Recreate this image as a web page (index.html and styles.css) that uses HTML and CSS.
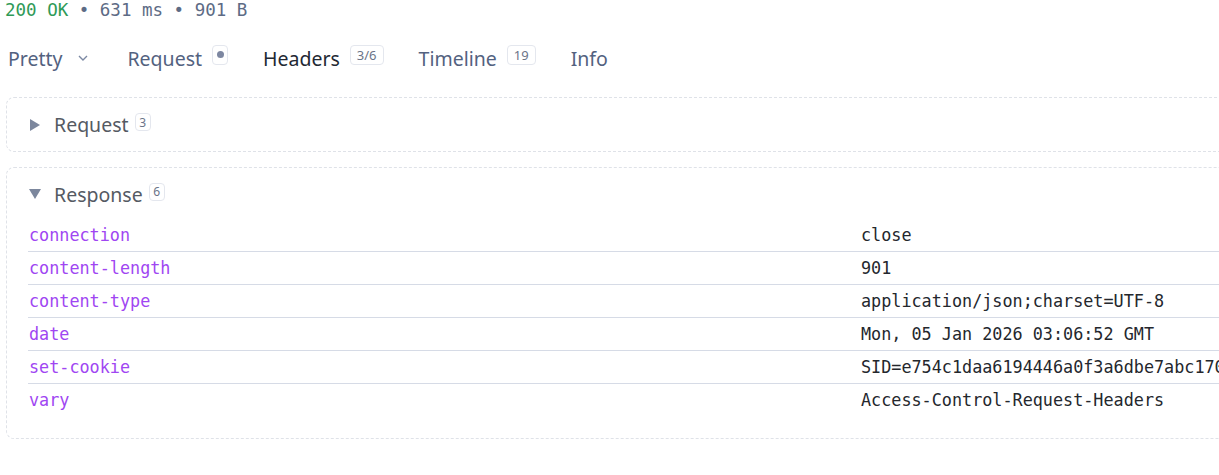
FILE: index.html
```html
<!DOCTYPE html>
<html>
<head>
    <title>Response headers</title>
    <meta charset="utf-8"/>
    <link rel="stylesheet" href="styles.css">
</head>
<body>

    <div class="status"><span class="ok">200 OK</span> &bull; 631 ms &bull; 901 B</div>

    <div class="tabs">
        <div class="tab">Pretty <svg class="chev" width="12" height="8" viewBox="0 0 12 8"><path d="M2 2 L6 6 L10 2" fill="none" stroke="#7b88a3" stroke-width="1.4"/></svg></div>
        <div class="tab">Request <span class="badge dot-badge"><span class="dot"></span></span></div>
        <div class="tab active">Headers <span class="badge">3/6</span></div>
        <div class="tab">Timeline <span class="badge">19</span></div>
        <div class="tab">Info</div>
    </div>

    <div class="panel first">
        <div class="panel-head">
            <svg class="tri" width="10" height="12" viewBox="0 0 10 12"><path d="M0 0 L10 6 L0 12 Z" fill="#7c879d"/></svg>
            <span class="panel-title">Request</span>
            <span class="badge small">3</span>
        </div>
    </div>

    <div class="panel open">
        <div class="panel-head">
            <svg class="tri" width="12" height="10" viewBox="0 0 12 10"><path d="M0 0 L12 0 L6 10 Z" fill="#7c879d"/></svg>
            <span class="panel-title">Response</span>
            <span class="badge small">6</span>
        </div>
        <table class="headers">
            <colgroup><col class="key-col"><col></colgroup>
            <tr><td class="key">connection</td><td class="val">close</td></tr>
            <tr><td class="key">content-length</td><td class="val">901</td></tr>
            <tr><td class="key">content-type</td><td class="val">application/json;charset=UTF-8</td></tr>
            <tr><td class="key">date</td><td class="val">Mon, 05 Jan 2026 03:06:52 GMT</td></tr>
            <tr><td class="key">set-cookie</td><td class="val">SID=e754c1daa6194446a0f3a6dbe7abc170d2e4f1</td></tr>
            <tr><td class="key">vary</td><td class="val">Access-Control-Request-Headers</td></tr>
        </table>
    </div>

</body>
</html>
```

FILE: styles.css
```css
body {
    margin: 0px;
    padding: 0px;
    background-color: #fff;
    font-family: "Noto Sans", sans-serif;
    overflow: hidden;
    width: 1219px;
}

.status {
    font-family: "DejaVu Sans Mono", monospace;
    font-size: 17.5px;
    color: #5d6b85;
    padding-left: 5px;
    height: 20px;
    line-height: 20px;
    white-space: nowrap;
}
.status .ok {color: #2f9a57;}

.tabs {
    display: flex;
    align-items: center;
    gap: 35px;
    padding-left: 8px;
    height: 40px;
    margin-top: 18px;
}
.tab {
    display: flex;
    align-items: center;
    gap: 10px;
    font-size: 19.5px;
    color: #53627f;
    white-space: nowrap;
}
.tab.active {color: #222833;}
.chev {margin-left: 5px; margin-right: 3px;}

.badge {
    display: inline-flex;
    align-items: center;
    justify-content: center;
    height: 20px;
    min-width: 17px;
    padding: 0 6px;
    border: 1px solid #e4e7ee;
    border-radius: 4px;
    font-size: 13px;
    color: #6b7488;
    box-sizing: border-box;
    margin-top: -7px;
}
.badge.dot-badge {width: 16px; min-width: 16px; padding: 0px;}
.badge .dot {width: 7px; height: 7px; border-radius: 50%; background-color: #7d87a1;}
.badge.small {height: 18px; min-width: 16px; padding: 0 3px; font-size: 12px; margin-top: -5px;}

.panel {
    width: 1300px;
    margin-left: 6px;
    border: 1px dashed #dfe2e8;
    border-radius: 8px;
    box-sizing: border-box;
}
.panel.first {margin-top: 19px;}
.panel.open {margin-top: 15px; padding-bottom: 22px;}

.panel-head {
    display: flex;
    align-items: center;
    height: 53px;
    padding-left: 21px;
}
.open .panel-head {height: 50px; padding-top: 1px;}
.tri {width: 14px; display: block;}
.panel-title {
    font-size: 19.5px;
    color: #555a63;
    margin-left: 12px;
    margin-right: 6px;
}

.headers {
    border-collapse: collapse;
    table-layout: fixed;
    margin-left: 21px;
    width: 1250px;
    font-family: "DejaVu Sans Mono", monospace;
    font-size: 16.8px;
}
.key-col {width: 832px;}
.headers td {
    height: 32px;
    padding: 0 0 0 1px;
    border-bottom: 1px solid #d6dbe6;
    white-space: nowrap;
    overflow: hidden;
}
.headers tr:last-child td {border-bottom: 0px;}
.key {color: #a046f2;}
.val {color: #24272d;}
```
